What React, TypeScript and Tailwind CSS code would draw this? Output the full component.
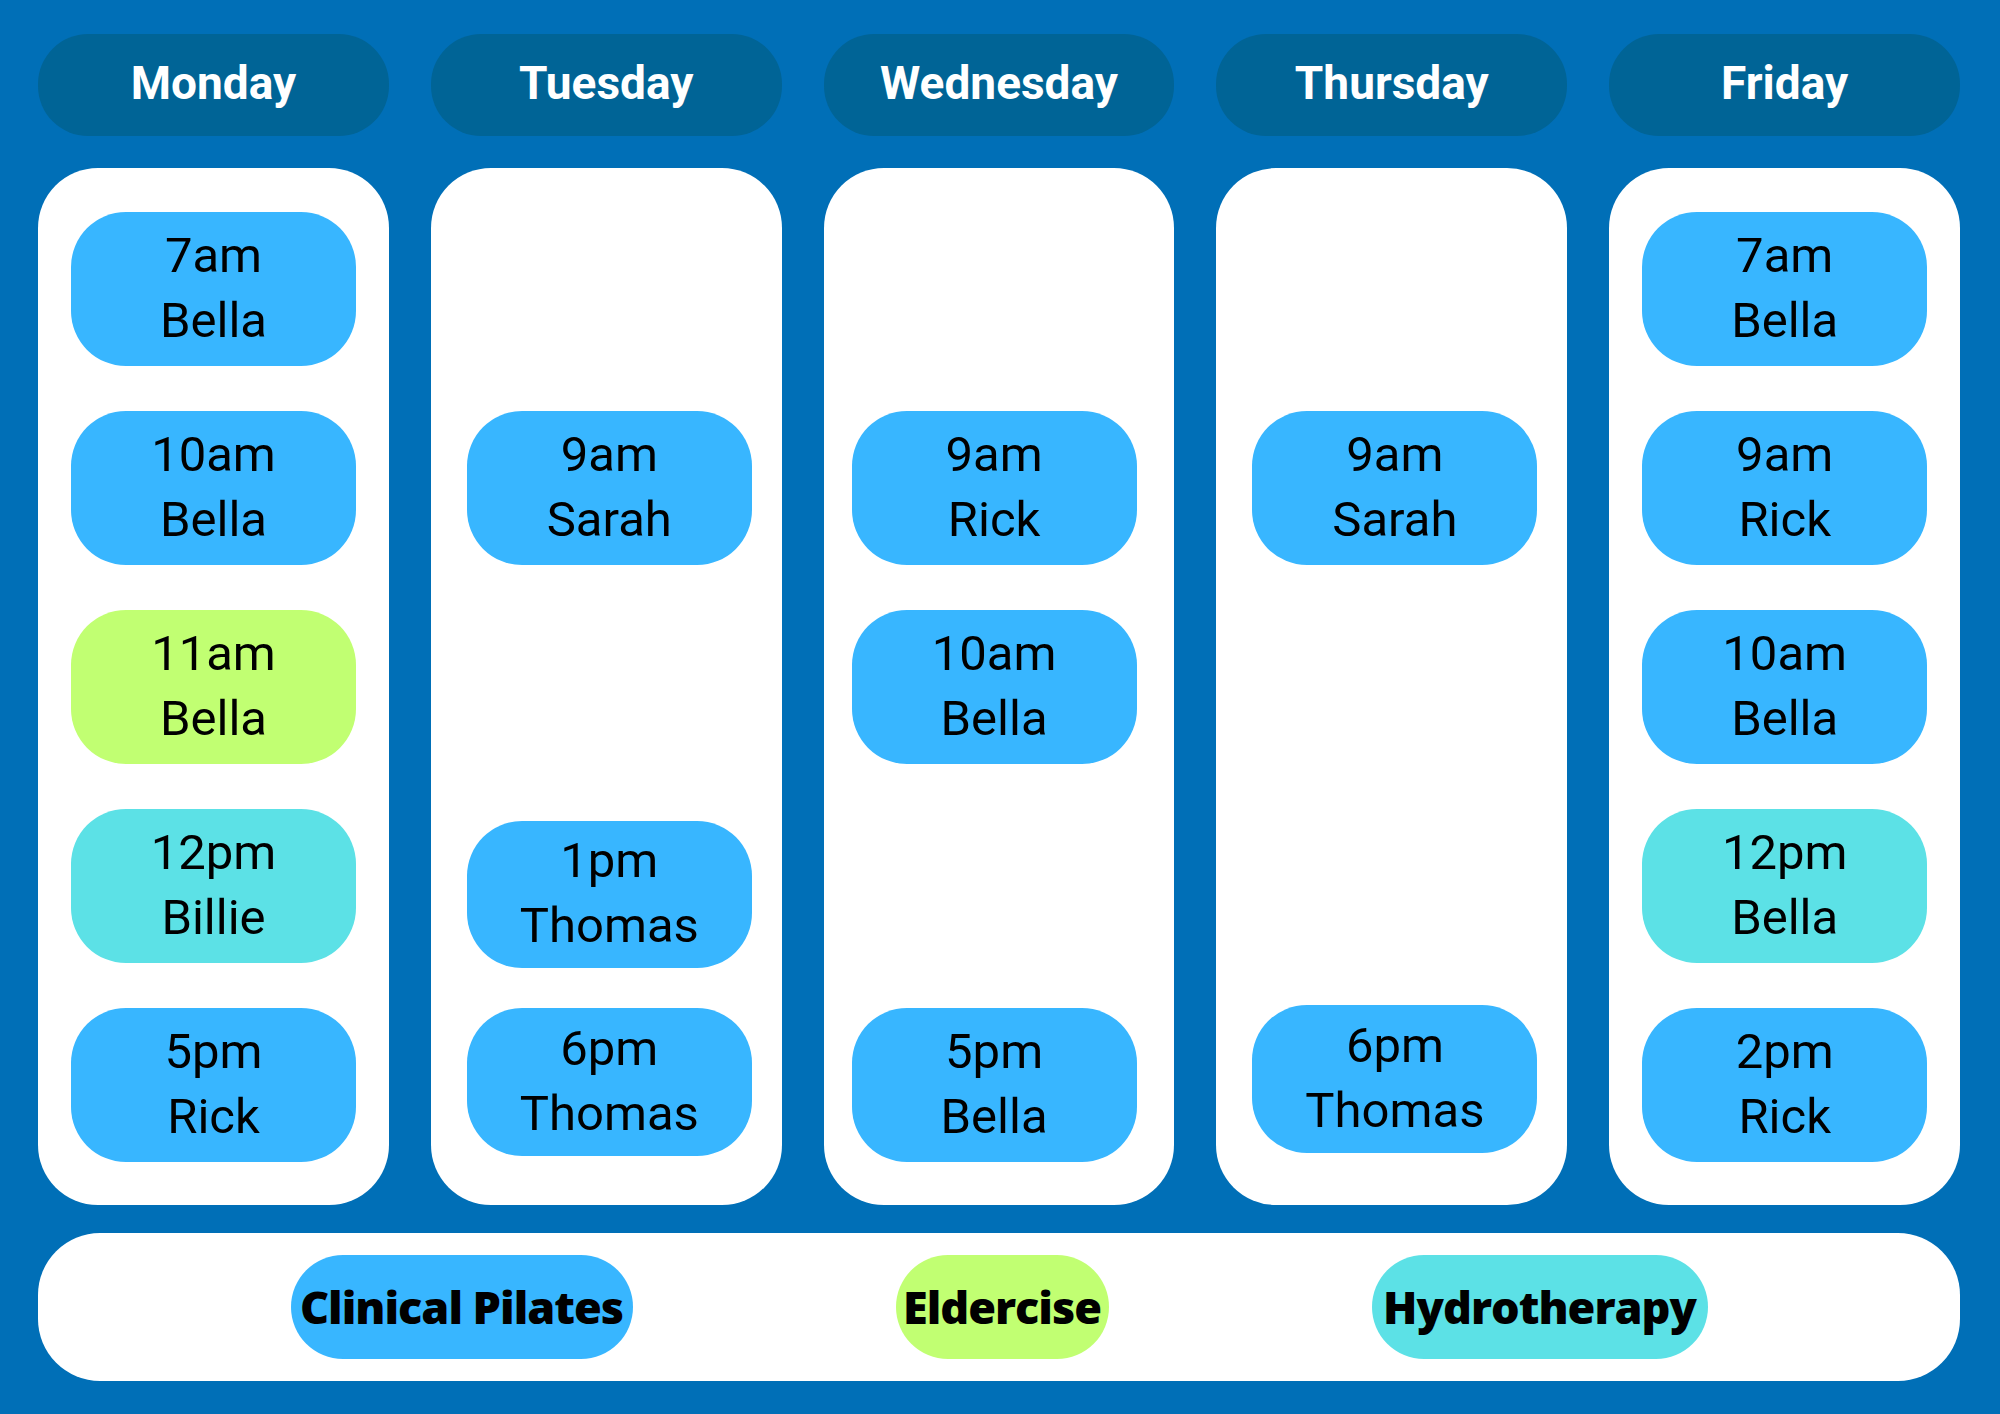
import React from "react";

type Slot = { time: string; name: string; color: string; cls?: string } | null;

const BLUE = "bg-[#38b6ff]";
const GREEN = "bg-[#c1ff72]";
const TEAL = "bg-[#5ce1e6]";

const days: { day: string; pad: string; slots: Slot[] }[] = [
  {
    day: "Monday",
    pad: "pl-[33px]",
    slots: [
      { time: "7am", name: "Bella", color: BLUE },
      { time: "10am", name: "Bella", color: BLUE },
      { time: "11am", name: "Bella", color: GREEN },
      { time: "12pm", name: "Billie", color: TEAL },
      { time: "5pm", name: "Rick", color: BLUE },
    ],
  },
  {
    day: "Tuesday",
    pad: "pl-[36px]",
    slots: [
      null,
      { time: "9am", name: "Sarah", color: BLUE },
      null,
      { time: "1pm", name: "Thomas", color: BLUE, cls: "mt-[12px] h-[147px]" },
      { time: "6pm", name: "Thomas", color: BLUE, cls: "h-[148px]" },
    ],
  },
  {
    day: "Wednesday",
    pad: "pl-[28px]",
    slots: [
      null,
      { time: "9am", name: "Rick", color: BLUE },
      { time: "10am", name: "Bella", color: BLUE },
      null,
      { time: "5pm", name: "Bella", color: BLUE },
    ],
  },
  {
    day: "Thursday",
    pad: "pl-[36px]",
    slots: [
      null,
      { time: "9am", name: "Sarah", color: BLUE },
      null,
      null,
      { time: "6pm", name: "Thomas", color: BLUE, cls: "-mt-[3px] h-[148px]" },
    ],
  },
  {
    day: "Friday",
    pad: "pl-[33px]",
    slots: [
      { time: "7am", name: "Bella", color: BLUE },
      { time: "9am", name: "Rick", color: BLUE },
      { time: "10am", name: "Bella", color: BLUE },
      { time: "12pm", name: "Bella", color: TEAL },
      { time: "2pm", name: "Rick", color: BLUE },
    ],
  },
];

export default function App() {
  return (
    <div
      className="w-[2000px] h-[1414px] bg-[#006fb7] pt-[34px] pl-[38px] pr-[40px] flex flex-col"
      style={{ fontFamily: "Roboto, 'Noto Sans', sans-serif" }}
    >
      <div className="grid grid-cols-5 gap-x-[42px]">
        {days.map((d) => (
          <div
            key={d.day}
            className="h-[102px] rounded-[50px] bg-[#006496] flex items-center justify-center text-white font-bold text-[46px] pb-[4px]"
          >
            {d.day}
          </div>
        ))}
      </div>
      <div className="grid grid-cols-5 gap-x-[42px] mt-[32px]">
        {days.map((d) => (
          <div
            key={d.day}
            className={`h-[1037px] rounded-[60px] bg-white pt-[44px] flex flex-col gap-[45px] ${d.pad}`}
          >
            {d.slots.map((s, i) => (
              <div key={i} className="h-[154px] w-[285px]">
                {s && (
                  <div
                    className={`${s.color} ${s.cls ?? "h-[154px]"} w-[285px] rounded-[55px] flex flex-col items-center justify-center text-black text-[49px] leading-[65px] pb-[3px]`}
                  >
                    <span>{s.time}</span>
                    <span>{s.name}</span>
                  </div>
                )}
              </div>
            ))}
          </div>
        ))}
      </div>
      <div className="mt-[28px] h-[148px] rounded-[62px] bg-white flex items-center justify-center gap-[263px]">
        {[
          { label: "Clinical Pilates", color: BLUE, w: "w-[342px]" },
          { label: "Eldercise", color: GREEN, w: "w-[213px]" },
          { label: "Hydrotherapy", color: TEAL, w: "w-[336px]" },
        ].map((l) => (
          <div
            key={l.label}
            className={`${l.color} ${l.w} h-[104px] rounded-[52px] flex items-center justify-center whitespace-nowrap text-black font-extrabold text-[45px] tracking-[-1px]`}
            style={{ fontFamily: "'Open Sans', sans-serif" }}
          >
            {l.label}
          </div>
        ))}
      </div>
    </div>
  );
}
